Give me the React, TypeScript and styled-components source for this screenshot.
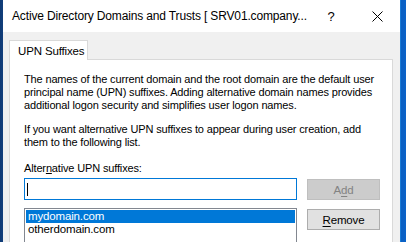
import React from 'react';
import styled, { createGlobalStyle } from 'styled-components';

const GlobalStyle = createGlobalStyle`
  html, body {
    margin: 0;
    padding: 0;
    width: 406px;
    height: 242px;
    overflow: hidden;
  }
  body {
    font-family: "Liberation Sans", Arial, sans-serif;
    font-size: 11px;
    letter-spacing: -0.15px;
    color: #000;
  }
`;

const Desktop = styled.div`
  display: flex;
  width: 406px;
  height: 242px;
  background: linear-gradient(90deg, #0f3a74 0px, #123f7c 3px, #0a5fc2 401px, #0b63c9 406px);
`;

const Window = styled.div`
  margin-left: 3px;
  width: 398px;
  height: 242px;
  display: flex;
  flex-direction: column;
  background: #f0f0f0;
  border-right: 1px solid #1a7bd6;
  box-sizing: border-box;
  overflow: hidden;
`;

const TitleBar = styled.div`
  height: 32px;
  flex: none;
  display: flex;
  align-items: center;
  background: #fff;
`;

const Title = styled.div`
  flex: 1;
  padding-left: 9px;
  font-size: 12px;
  white-space: nowrap;
  overflow: hidden;
`;

const CaptionButton = styled.div`
  width: 46px;
  height: 32px;
  display: flex;
  align-items: center;
  justify-content: center;
  font-size: 13px;
`;

const Client = styled.div`
  flex: 1;
  padding: 8px 0 0 6px;
`;

const TabStrip = styled.div`
  display: flex;
  position: relative;
  z-index: 1;
`;

const Tab = styled.div`
  height: 20px;
  width: 79px;
  padding: 0 8px;
  display: flex;
  align-items: center;
  white-space: nowrap;
  font-size: 11.5px;
  background: #fff;
  border: 1px solid #d9d9d9;
  border-bottom: none;
  box-sizing: border-box;
`;

const Panel = styled.div`
  width: 384px;
  height: 200px;
  box-sizing: border-box;
  background: #fff;
  border: 1px solid #d9d9d9;
  margin-top: -1px;
  padding: 13px 14px 0 14px;
`;

const Para = styled.p<{ $gap?: number }>`
  margin: 0 0 ${(p) => p.$gap ?? 0}px 0;
  line-height: 13px;
  white-space: nowrap;
`;

const Label = styled.div`
  margin-top: 13px;
  line-height: 13px;
`;

const Grid = styled.div`
  display: grid;
  grid-template-columns: 273px 73px;
  column-gap: 10px;
  row-gap: 8px;
  margin-top: 3px;
  align-items: start;
`;

const TextBox = styled.div`
  height: 22px;
  box-sizing: border-box;
  border: 1px solid #0078d7;
  background: #fff;
  display: flex;
  align-items: center;
  padding-left: 2px;
`;

const Caret = styled.span`
  width: 1px;
  height: 13px;
  background: #000;
`;

const Button = styled.div<{ $disabled?: boolean }>`
  height: 21px;
  box-sizing: border-box;
  display: flex;
  align-items: center;
  justify-content: center;
  margin-top: 1px;
  font-size: 11.5px;
  background: ${(p) => (p.$disabled ? '#cccccc' : '#e1e1e1')};
  border: 1px solid ${(p) => (p.$disabled ? '#bfbfbf' : '#adadad')};
  color: ${(p) => (p.$disabled ? '#838383' : '#000')};
  u { text-decoration-thickness: 1px; text-underline-offset: 2px; }
`;

const ListBox = styled.div`
  height: 60px;
  box-sizing: border-box;
  border: 1px solid #828790;
  background: #fff;
  padding: 1px;
`;

const ListItem = styled.div<{ $selected?: boolean }>`
  height: 13px;
  line-height: 13px;
  padding-left: 2px;
  font-size: 11.5px;
  background: ${(p) => (p.$selected ? '#0078d7' : 'transparent')};
  color: ${(p) => (p.$selected ? '#fff' : '#000')};
`;

export default function App() {
  return (
    <>
      <GlobalStyle />
      <Desktop>
        <Window>
          <TitleBar>
            <Title>Active Directory Domains and Trusts [ SRV01.company...</Title>
            <CaptionButton>?</CaptionButton>
            <CaptionButton>
              <svg width="11" height="11" viewBox="0 0 11 11">
                <path d="M0.5 0.5 L10.5 10.5 M10.5 0.5 L0.5 10.5" stroke="#000" strokeWidth="1" fill="none" />
              </svg>
            </CaptionButton>
          </TitleBar>
          <Client>
            <TabStrip>
              <Tab>UPN Suffixes</Tab>
            </TabStrip>
            <Panel>
              <Para $gap={11}>
                The names of the current domain and the root domain are the default user
                <br />
                principal name (UPN) suffixes. Adding alternative domain names provides
                <br />
                additional logon security and simplifies user logon names.
              </Para>
              <Para>
                If you want alternative UPN suffixes to appear during user creation, add
                <br />
                them to the following list.
              </Para>
              <Label>
                Alter<u>n</u>ative UPN suffixes:
              </Label>
              <Grid>
                <TextBox>
                  <Caret />
                </TextBox>
                <Button $disabled>
                  A<u>d</u>d
                </Button>
                <ListBox>
                  <ListItem $selected>mydomain.com</ListItem>
                  <ListItem>otherdomain.com</ListItem>
                </ListBox>
                <Button>
                  <u>R</u>emove
                </Button>
              </Grid>
            </Panel>
          </Client>
        </Window>
      </Desktop>
    </>
  );
}
